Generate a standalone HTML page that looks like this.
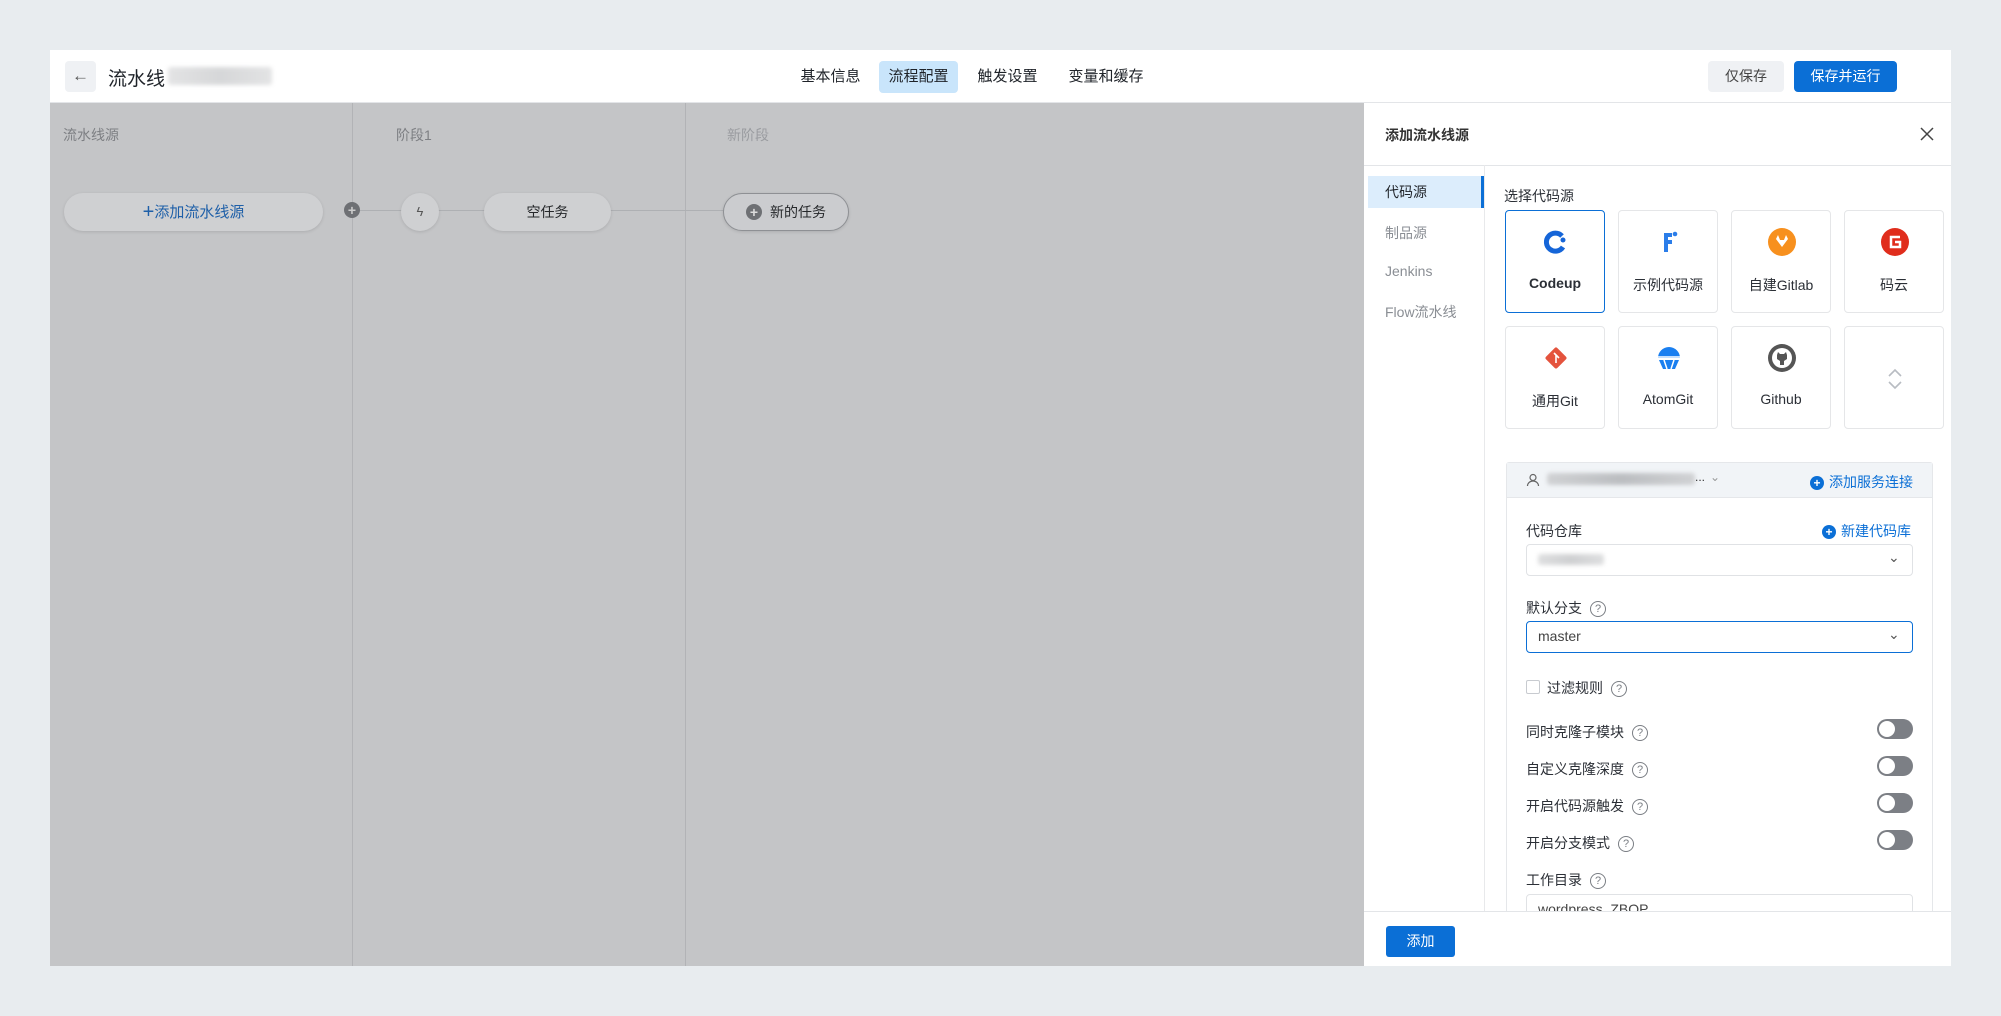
<!DOCTYPE html>
<html><head><meta charset="utf-8">
<style>
*{box-sizing:border-box;margin:0;padding:0}
body{width:2001px;height:1016px;background:#e8ecef;font-family:"Liberation Sans","Noto Sans CJK SC",sans-serif;position:relative;overflow:hidden;color:#1f2329}
.a{position:absolute}
.card{left:50px;top:50px;width:1901px;height:916px;background:#fff}
.hdr{left:50px;top:50px;width:1901px;height:53px;background:#fff;border-bottom:1px solid #e3e5e8}
.tab{top:61px;height:32px;line-height:32px;font-size:15px;color:#1f2329;padding:0;text-align:center;border-radius:4px;white-space:nowrap}
.canvas{left:50px;top:103px;width:1314px;height:863px;background:#c4c5c7}
.vl{top:103px;width:1px;height:863px;background:#b2b3b6}
.collab{top:125px;font-size:14px;color:#7d7f83}
.pill{top:193px;height:38px;border-radius:19px;background:#cfd0d2;box-shadow:0 1px 3px rgba(0,0,0,.12);text-align:center;line-height:38px;font-size:14px;color:#26282b}
.panel{left:1364px;top:103px;width:587px;height:863px;background:#fff}
.nav{left:1385px;font-size:14px;color:#8a8e94}
.src{width:100px;height:103px;border:1px solid #e5e6e8;border-radius:4px;background:#fff}
.src .ic{position:absolute;left:36px;top:17px;width:28px;height:28px}
.src .lb{position:absolute;left:0;right:0;top:64px;text-align:center;font-size:14px;color:#2b2f36}
.lbl{font-size:14px;color:#2b2f36}
.q{display:inline-block;width:16px;height:16px;border:1.3px solid #7a7e84;border-radius:50%;font-size:11px;line-height:14px;text-align:center;color:#7a7e84;vertical-align:middle;margin-left:8px}
.sel{left:1526px;width:387px;height:32px;border:1px solid #e0e2e5;border-radius:4px}
.tg{left:1877px;width:36px;height:20px;border-radius:10px;background:#7c7f85}
.tg::after{content:"";position:absolute;left:2px;top:2px;width:16px;height:16px;border-radius:50%;background:#fff}
.blur{background:linear-gradient(90deg,#c8c9cb,#aeb0b3,#c8c9cb);filter:blur(2px);border-radius:3px}
</style></head><body>
<div class="a card"></div>
<div class="a hdr"></div>
<div class="a" style="left:65px;top:61px;width:31px;height:31px;background:#eff1f4;border-radius:4px;text-align:center;line-height:30px;font-size:17px;color:#555">←</div>
<div class="a" style="left:108px;top:64px;font-size:19px;color:#1f2329">流水线</div>
<div class="a blur" style="left:168px;top:67px;width:104px;height:18px;opacity:.5"></div>
<div class="a tab" style="left:791px;width:79px">基本信息</div>
<div class="a tab" style="left:879px;width:79px;background:#c9e5fb">流程配置</div>
<div class="a tab" style="left:968px;width:79px">触发设置</div>
<div class="a tab" style="left:1061px;width:90px">变量和缓存</div>
<div class="a" style="left:1708px;top:61px;width:76px;height:31px;background:#eff1f4;border-radius:4px;text-align:center;line-height:31px;font-size:14px;color:#444">仅保存</div>
<div class="a" style="left:1794px;top:61px;width:103px;height:31px;background:#0b6fd6;border-radius:4px;text-align:center;line-height:31px;font-size:14px;color:#fff">保存并运行</div>

<div class="a canvas"></div>
<div class="a vl" style="left:352px"></div>
<div class="a vl" style="left:685px"></div>
<div class="a collab" style="left:63px">流水线源</div>
<div class="a collab" style="left:396px">阶段1</div>
<div class="a collab" style="left:727px;color:#9a9ca0">新阶段</div>
<div class="a" style="left:352px;top:210px;width:375px;height:1px;background:#aeb0b3"></div>
<div class="a pill" style="left:64px;width:259px;color:#1e5fa8;font-size:15px"><span style="font-size:20px;vertical-align:-1px">+</span>添加流水线源</div>
<div class="a" style="left:344px;top:202px;width:16px;height:16px;border-radius:50%;background:#6e7074;color:#ccc;text-align:center;line-height:16px;font-size:14px;font-weight:bold">+</div>
<div class="a pill" style="left:401px;width:38px;font-size:13px;color:#555">ϟ</div>
<div class="a pill" style="left:484px;width:127px">空任务</div>
<div class="a pill" style="left:723px;width:126px;border:1px solid #8e9094;background:#cbcccf;line-height:36px"><span style="display:inline-block;width:16px;height:16px;border-radius:50%;background:#6e7074;color:#ddd;line-height:16px;font-size:14px;font-weight:bold;margin-right:8px">+</span>新的任务</div>

<div class="a panel"></div>
<div class="a" style="left:1385px;top:125px;font-size:14px;color:#333;font-weight:bold">添加流水线源</div>
<svg class="a" style="left:1920px;top:127px" width="14" height="14" viewBox="0 0 14 14"><path d="M1 1l12 12M13 1L1 13" stroke="#444" stroke-width="1.5"/></svg>
<div class="a" style="left:1364px;top:165px;width:587px;height:1px;background:#e3e5e8"></div>
<div class="a" style="left:1484px;top:165px;width:1px;height:746px;background:#e8e9eb"></div>
<div class="a" style="left:1368px;top:176px;width:116px;height:32px;background:#dcedfc;border-right:3px solid #0b6fd6"></div>
<div class="a nav" style="left:1385px;top:182px;color:#1f2329">代码源</div>
<div class="a nav" style="top:223px">制品源</div>
<div class="a nav" style="top:263px">Jenkins</div>
<div class="a nav" style="top:302px">Flow流水线</div>
<div class="a lbl" style="left:1504px;top:186px">选择代码源</div>

<div class="a src" style="left:1505px;top:210px;border-color:#0b6fd6"><svg class="ic" viewBox="0 0 28 28"><path d="M20 8 A9 9 0 1 0 21 19" fill="none" stroke="#1565d8" stroke-width="5"/><circle cx="21" cy="12" r="2.5" fill="#1565d8"/></svg><div class="lb" style="font-weight:bold">Codeup</div></div>
<div class="a src" style="left:1618px;top:210px"><svg class="ic" viewBox="0 0 28 28"><path d="M9 5h8v4h-4v3h4v4h-4v8h-4z" fill="#2b7de9"/><circle cx="20" cy="6" r="2.3" fill="#2b7de9"/></svg><div class="lb">示例代码源</div></div>
<div class="a src" style="left:1731px;top:210px"><svg class="ic" viewBox="0 0 28 28"><circle cx="14" cy="14" r="14" fill="#f7901e"/><path d="M8 11l2-4 2 5h4l2-5 2 4-6 8z" fill="#fff"/></svg><div class="lb">自建Gitlab</div></div>
<div class="a src" style="left:1844px;top:210px"><svg class="ic" viewBox="0 0 28 28"><circle cx="14" cy="14" r="14" fill="#e02d1c"/><path d="M19 9h-9v10h9v-5h-5" fill="none" stroke="#fff" stroke-width="2.5"/></svg><div class="lb">码云</div></div>
<div class="a src" style="left:1505px;top:326px"><svg class="ic" viewBox="0 0 28 28"><rect x="6" y="6" width="16" height="16" transform="rotate(45 14 14)" rx="2" fill="#e4533d"/><path d="M12 9l5 5M14 11v8" stroke="#fff" stroke-width="1.6"/></svg><div class="lb">通用Git</div></div>
<div class="a src" style="left:1618px;top:326px"><svg class="ic" viewBox="0 0 28 28"><path d="M3 14a11 11 0 0 1 22 0z" fill="#1a7ff0"/><path d="M4 16h20l-4 9h-12z" fill="#1a7ff0"/><path d="M9 16l3 9M19 16l-3 9M3 13h22" stroke="#fff" stroke-width="1.5"/></svg><div class="lb">AtomGit</div></div>
<div class="a src" style="left:1731px;top:326px"><svg class="ic" viewBox="0 0 28 28"><circle cx="14" cy="14" r="14" fill="#555"/><circle cx="14" cy="14" r="10" fill="#fff"/><path d="M9 11l1-3 2 2h4l2-2 1 3v4l-3 2v4h-4v-4l-3-2z" fill="#555"/></svg><div class="lb">Github</div></div>
<div class="a src" style="left:1844px;top:326px"><svg class="a" style="left:41px;top:40px" width="18" height="24" viewBox="0 0 18 24"><path d="M3 9l6-6 6 6M3 15l6 6 6-6" fill="none" stroke="#b8bcc2" stroke-width="1.6"/></svg></div>

<div class="a" style="left:1506px;top:462px;width:427px;height:460px;border:1px solid #e5e7ea;border-radius:3px"></div>
<div class="a" style="left:1507px;top:463px;width:425px;height:35px;background:#f1f4f7;border-bottom:1px solid #e5e7ea"></div>
<svg class="a" style="left:1526px;top:473px" width="14" height="14" viewBox="0 0 14 14"><circle cx="7" cy="4.5" r="3" fill="none" stroke="#666" stroke-width="1.2"/><path d="M1.5 13a5.5 5 0 0 1 11 0" fill="none" stroke="#666" stroke-width="1.2"/></svg>
<div class="a blur" style="left:1547px;top:473px;width:148px;height:12px;opacity:.8"></div>
<div class="a" style="left:1695px;top:470px;font-size:12px;color:#333">...</div>
<div class="a" style="left:1710px;top:470px;font-size:12px;color:#999">⌄</div>
<div class="a" style="left:1810px;top:472px;font-size:14px;color:#0b6fd6"><span style="display:inline-block;width:14px;height:14px;border-radius:50%;background:#0b6fd6;color:#fff;font-size:12px;line-height:14px;text-align:center;font-weight:bold;margin-right:5px">+</span>添加服务连接</div>
<div class="a lbl" style="left:1526px;top:521px">代码仓库</div>
<div class="a" style="left:1822px;top:521px;font-size:14px;color:#0b6fd6"><span style="display:inline-block;width:14px;height:14px;border-radius:50%;background:#0b6fd6;color:#fff;font-size:12px;line-height:14px;text-align:center;font-weight:bold;margin-right:5px">+</span>新建代码库</div>
<div class="a sel" style="top:544px"></div>
<div class="a blur" style="left:1538px;top:554px;width:66px;height:11px;opacity:.6"></div>
<div class="a" style="left:1888px;top:549px;font-size:14px;color:#555">⌄</div>
<div class="a lbl" style="left:1526px;top:598px">默认分支<span class="q">?</span></div>
<div class="a sel" style="top:621px;border-color:#0b6fd6"></div>
<div class="a" style="left:1538px;top:628px;font-size:14px;color:#444">master</div>
<div class="a" style="left:1888px;top:626px;font-size:14px;color:#555">⌄</div>
<div class="a" style="left:1526px;top:680px;width:14px;height:14px;border:1px solid #c8cbd0;border-radius:2px"></div>
<div class="a lbl" style="left:1547px;top:678px">过滤规则<span class="q">?</span></div>
<div class="a lbl" style="left:1526px;top:722px">同时克隆子模块<span class="q">?</span></div>
<div class="a tg" style="top:719px"></div>
<div class="a lbl" style="left:1526px;top:759px">自定义克隆深度<span class="q">?</span></div>
<div class="a tg" style="top:756px"></div>
<div class="a lbl" style="left:1526px;top:796px">开启代码源触发<span class="q">?</span></div>
<div class="a tg" style="top:793px"></div>
<div class="a lbl" style="left:1526px;top:833px">开启分支模式<span class="q">?</span></div>
<div class="a tg" style="top:830px"></div>
<div class="a lbl" style="left:1526px;top:870px">工作目录<span class="q">?</span></div>
<div class="a" style="left:1526px;top:894px;width:387px;height:30px;border:1px solid #e0e2e5;border-radius:4px;overflow:hidden"><div style="padding:6px 11px;font-size:14px;color:#444">wordpress_ZBQP</div></div>
<div class="a" style="left:1364px;top:911px;width:587px;height:55px;background:#fff;border-top:1px solid #e3e5e8"></div>
<div class="a" style="left:1386px;top:926px;width:69px;height:31px;background:#0b6fd6;border-radius:3px;color:#fff;text-align:center;line-height:31px;font-size:14px">添加</div>
</body></html>
